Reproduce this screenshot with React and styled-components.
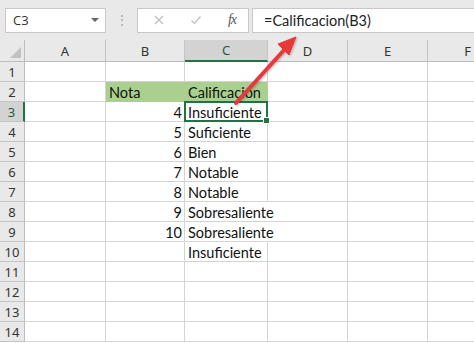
import React from 'react';
import styled, { createGlobalStyle } from 'styled-components';

const GlobalStyle = createGlobalStyle`
    html, body { margin:0; padding:0; background:#fff; }
    body { width:474px; height:343px; overflow:hidden; }
`;

const COLS = [
    { key: 'A', width: 81 },
    { key: 'B', width: 79 },
    { key: 'C', width: 83 },
    { key: 'D', width: 80 },
    { key: 'E', width: 80 },
    { key: 'F', width: 80 },
];

const DATA = {
    2: { B: { text: 'Nota', fill: true }, C: { text: 'Calificacion', fill: true } },
    3: { B: { text: '4', num: true }, C: { text: 'Insuficiente' } },
    4: { B: { text: '5', num: true }, C: { text: 'Suficiente' } },
    5: { B: { text: '6', num: true }, C: { text: 'Bien' } },
    6: { B: { text: '7', num: true }, C: { text: 'Notable' } },
    7: { B: { text: '8', num: true }, C: { text: 'Notable' } },
    8: { B: { text: '9', num: true }, C: { text: 'Sobresaliente', spill: true } },
    9: { B: { text: '10', num: true }, C: { text: 'Sobresaliente', spill: true } },
    10: { C: { text: 'Insuficiente' } },
};

const ROWS = Array.from({ length: 14 }, (_, i) => i + 1);
const gridTemplate = `25px ${COLS.map(c => c.width + 'px').join(' ')}`;

const App = () => (
    <Page>
        <GlobalStyle />
        <FormulaBar>
            <NameBox>
                C3
                <Caret />
            </NameBox>
            <Grip>⋮</Grip>
            <IconBox>
                <ToolIcon viewBox="0 0 12 12">
                    <path d="M2 2 L10 10 M10 2 L2 10" />
                </ToolIcon>
                <ToolIcon viewBox="0 0 12 12">
                    <path d="M1.5 6.5 L4.5 9.5 L10.5 2.5" />
                </ToolIcon>
                <Fx>fx</Fx>
            </IconBox>
            <FormulaInput>=Calificacion(B3)</FormulaInput>
        </FormulaBar>

        <Sheet style={{ gridTemplateColumns: gridTemplate }}>
            <Corner><CornerMark /></Corner>
            {COLS.map(c => (
                <ColHeader key={c.key} $active={c.key === 'C'}>{c.key}</ColHeader>
            ))}
            {ROWS.map(r => (
                <React.Fragment key={r}>
                    <RowHeader $active={r === 3}>{r}</RowHeader>
                    {COLS.map(c => {
                        const cell = DATA[r] && DATA[r][c.key];
                        const selected = r === 3 && c.key === 'C';
                        return (
                            <Cell
                                key={c.key}
                                $fill={cell && cell.fill}
                                $num={cell && cell.num}
                                $spill={cell && cell.spill}
                            >
                                {cell && <CellText>{cell.text}</CellText>}
                                {selected && <Selection><Handle /></Selection>}
                            </Cell>
                        );
                    })}
                </React.Fragment>
            ))}
        </Sheet>

        <Arrow viewBox="0 0 474 343">
            <defs>
                <filter id="shadow" x="-20%" y="-20%" width="140%" height="140%">
                    <feDropShadow dx="1" dy="1" stdDeviation="1" floodColor="#000" floodOpacity="0.25" />
                </filter>
            </defs>
            <g filter="url(#shadow)" fill="#e8393a" stroke="#e8393a">
                <line x1="236" y1="103" x2="285" y2="49" strokeWidth="4" strokeLinecap="round" />
                <polygon points="296,37 278,44 289,55" strokeWidth="1" strokeLinejoin="round" />
            </g>
        </Arrow>
    </Page>
);

export default App;

const Page = styled.div`
    position:relative;
    width:474px;
    height:343px;
    overflow:hidden;
    font-family:"Lato", "Open Sans", sans-serif;
`;

const FormulaBar = styled.div`
    height:40px;
    box-sizing:border-box;
    background:#e9e9e9;
    display:flex;
    align-items:center;
    padding:0 0 0 5px;
`;

const NameBox = styled.div`
    width:101px;
    height:25px;
    box-sizing:border-box;
    background:#fff;
    border:1px solid #c8c8c8;
    display:flex;
    align-items:center;
    justify-content:space-between;
    padding:0 6px 0 7px;
    font-family:"Open Sans", sans-serif;
    font-size:13px;
    color:#333;
`;

const Caret = styled.span`
    width:0;
    height:0;
    border-left:4px solid transparent;
    border-right:4px solid transparent;
    border-top:4px solid #666;
`;

const Grip = styled.div`
    width:31px;
    text-align:center;
    color:#aaa;
    font-size:14px;
    line-height:1;
`;

const IconBox = styled.div`
    width:112px;
    height:25px;
    box-sizing:border-box;
    background:#fff;
    border:1px solid #c8c8c8;
    display:flex;
    align-items:center;
    justify-content:space-between;
    padding:0 12px 0 15px;
`;

const ToolIcon = styled.svg`
    width:12px;
    height:12px;
    fill:none;
    stroke:#c4c4c4;
    stroke-width:1.5;
`;

const Fx = styled.span`
    font-family:"Liberation Serif", serif;
    font-style:italic;
    font-size:14px;
    color:#555;
    letter-spacing:-1px;
`;

const FormulaInput = styled.div`
    flex:1;
    margin-left:3px;
    height:25px;
    box-sizing:border-box;
    background:#fff;
    border:1px solid #c8c8c8;
    border-right:none;
    display:flex;
    align-items:center;
    padding-left:11px;
    font-size:14.5px;
    color:#222;
`;

const Sheet = styled.div`
    display:grid;
    grid-template-rows:22px repeat(14, 20px);
`;

const Corner = styled.div`
    background:#e9e9e9;
    border-right:1px solid #bdbdbd;
    border-bottom:1px solid #bdbdbd;
    box-sizing:border-box;
    position:relative;
`;

const CornerMark = styled.div`
    position:absolute;
    right:3px;
    bottom:3px;
    width:0;
    height:0;
    border-left:11px solid transparent;
    border-bottom:11px solid #c2c2c2;
`;

const ColHeader = styled.div`
    box-sizing:border-box;
    background:${p => (p.$active ? '#d3d3d3' : '#e9e9e9')};
    border-right:1px solid #c4c4c4;
    border-bottom:${p => (p.$active ? '2px solid #217346' : '1px solid #bdbdbd')};
    display:flex;
    align-items:center;
    justify-content:center;
    font-family:"Noto Sans", "Open Sans", sans-serif;
    font-size:13px;
    color:${p => (p.$active ? '#1e5e3a' : '#333')};
`;

const RowHeader = styled.div`
    box-sizing:border-box;
    background:${p => (p.$active ? '#d3d3d3' : '#e9e9e9')};
    border-right:${p => (p.$active ? '2px solid #217346' : '1px solid #bdbdbd')};
    border-bottom:1px solid #c4c4c4;
    display:flex;
    align-items:center;
    justify-content:center;
    padding-top:1px;
    font-family:"Noto Sans", "Open Sans", sans-serif;
    font-size:13px;
    color:${p => (p.$active ? '#1e5e3a' : '#333')};
`;

const Cell = styled.div`
    position:relative;
    box-sizing:border-box;
    background:${p => (p.$fill ? '#a9d08e' : 'transparent')};
    border-right:1px solid ${p => (p.$fill ? '#a9d08e' : p.$spill ? 'transparent' : '#d4d4d4')};
    border-bottom:1px solid ${p => (p.$fill ? '#a9d08e' : '#d4d4d4')};
    display:flex;
    align-items:center;
    justify-content:${p => (p.$num ? 'flex-end' : 'flex-start')};
    padding:3px 2px 0 3px;
    font-size:14.5px;
    color:#111;
    white-space:nowrap;
`;

const CellText = styled.span`
    position:relative;
    z-index:1;
    line-height:1;
`;

const Selection = styled.div`
    position:absolute;
    left:-1px;
    top:-1px;
    right:-1px;
    bottom:-1px;
    border:2px solid #217346;
    pointer-events:none;
    z-index:2;
`;

const Handle = styled.div`
    position:absolute;
    right:-4px;
    bottom:-4px;
    width:5px;
    height:5px;
    background:#217346;
    border:1px solid #fff;
`;

const Arrow = styled.svg`
    position:absolute;
    left:0;
    top:0;
    width:474px;
    height:343px;
    pointer-events:none;
    z-index:3;
`;
